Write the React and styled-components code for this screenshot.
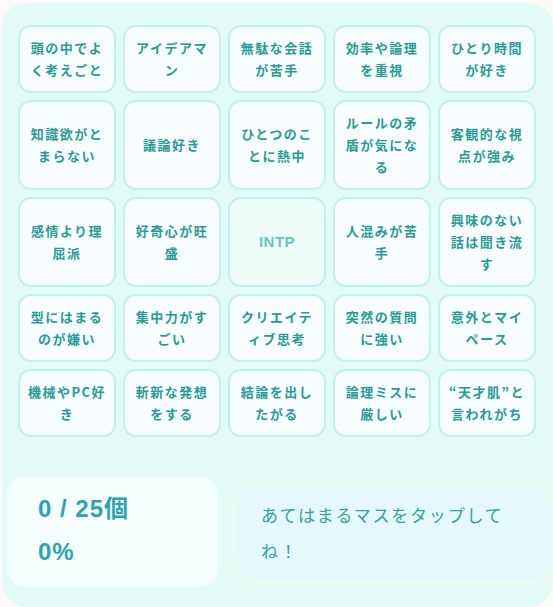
import React from "react";
import styled, { createGlobalStyle } from "styled-components";

const Global = createGlobalStyle`
  html, body { margin: 0; padding: 0; background: #fffaf7; }
  body { font-family: "Noto Sans CJK JP", "Noto Sans", sans-serif; }
`;

const Board = styled.div`
  box-sizing: border-box;
  margin: 3px 0 0 2px;
  width: 551px;
  height: 604px;
  border-radius: 24px;
  background: #e3fcf8;
  padding: 22px 18px 0 16px;
  overflow: hidden;
`;

const Grid = styled.div`
  display: grid;
  grid-template-columns: repeat(5, 98px);
  column-gap: 7px;
  row-gap: 7px;
`;

const Cell = styled.button`
  box-sizing: border-box;
  min-height: 68px;
  border: 2px solid #bff3ee;
  border-radius: 13px;
  background: ${(p) => (p.$free ? "#effdf8" : "#f7fdff")};
  color: ${(p) => (p.$free ? "#5ec9c2" : "#289b95")};
  font-family: ${(p) =>
    p.$free ? '"Liberation Sans", Arial, sans-serif' : '"Noto Sans CJK JP", sans-serif'};
  font-weight: 700;
  font-size: ${(p) => (p.$free ? "15px" : "13px")};
  letter-spacing: ${(p) => (p.$free ? "0.5px" : "1.5px")};
  line-height: 22px;
  padding: 10px 6px;
  text-align: center;
  display: flex;
  align-items: center;
  justify-content: center;
  cursor: pointer;
`;

const Footer = styled.div`
  display: flex;
  align-items: center;
  gap: 19px;
  margin: 40px -18px 0 -11px;
`;

const Score = styled.div`
  box-sizing: border-box;
  width: 211px;
  height: 109px;
  border-radius: 18px;
  background: #f6fffd;
  padding: 18px 0 0 31px;
  color: #2aa4b0;
  font-family: "Liberation Sans", Arial, "Noto Sans CJK JP", sans-serif;
  font-weight: 700;
  font-size: 24px;
  letter-spacing: 1px;
  display: flex;
  flex-direction: column;
  gap: 15px;
`;

const ScoreLine = styled.div`
  line-height: 28px;
`;

const Hint = styled.div`
  box-sizing: border-box;
  flex: 1;
  height: 93px;
  margin-top: 3px;
  border-radius: 22px;
  background: #e5f8fb;
  box-shadow: 0 0 10px 6px rgba(235, 252, 240, 0.9);
  padding: 0 22px 0 24px;
  display: flex;
  align-items: center;
  color: #35a2a5;
  font-family: "Noto Sans CJK JP", sans-serif;
  font-size: 17px;
  letter-spacing: 1.8px;
  line-height: 36px;
`;

const items = [
  "頭の中でよく考えごと", "アイデアマン", "無駄な会話が苦手", "効率や論理を重視", "ひとり時間が好き",
  "知識欲がとまらない", "議論好き", "ひとつのことに熱中", "ルールの矛盾が気になる", "客観的な視点が強み",
  "感情より理屈派", "好奇心が旺盛", "INTP", "人混みが苦手", "興味のない話は聞き流す",
  "型にはまるのが嫌い", "集中力がすごい", "クリエイティブ思考", "突然の質問に強い", "意外とマイペース",
  "機械やPC好き", "斬新な発想をする", "結論を出したがる", "論理ミスに厳しい", "“天才肌”と言われがち",
];

export default function App() {
  return (
    <>
      <Global />
      <Board>
        <Grid>
          {items.map((t, i) => (
            <Cell key={i} $free={i === 12}>
              {t}
            </Cell>
          ))}
        </Grid>
        <Footer>
          <Score>
            <ScoreLine>0 / 25個</ScoreLine>
            <ScoreLine>0%</ScoreLine>
          </Score>
          <Hint>あてはまるマスをタップしてね！</Hint>
        </Footer>
      </Board>
    </>
  );
}
